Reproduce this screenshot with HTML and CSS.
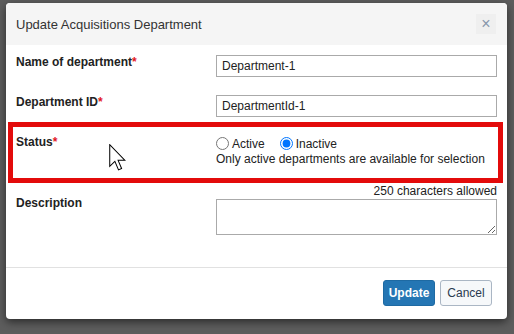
FILE: index.html
```html
<!DOCTYPE html>
<html>
<head>
<meta charset="utf-8">
<link rel="stylesheet" href="styles.css">
</head>
<body>
<div class="backdrop">
  <div class="modal">
    <div class="modal-header">
      <span class="modal-title">Update Acquisitions Department</span>
      <span class="close">&times;</span>
    </div>
    <div class="modal-body">
      <div class="row">
        <label class="label">Name of department<span class="req">*</span></label>
        <input class="text-input" type="text" value="Department-1">
      </div>
      <div class="row">
        <label class="label">Department ID<span class="req">*</span></label>
        <input class="text-input" type="text" value="DepartmentId-1">
      </div>
      <div class="row">
        <label class="label">Status<span class="req">*</span></label>
        <div class="value">
          <div class="radios">
            <label class="radio"><input type="radio" name="status"><span>Active</span></label>
            <label class="radio"><input type="radio" name="status" checked><span>Inactive</span></label>
          </div>
          <div class="help">Only active departments are available for selection</div>
        </div>
      </div>
      <div class="row">
        <label class="label label-desc">Description</label>
        <div class="value">
          <div class="counter">250 characters allowed</div>
          <textarea class="textarea"></textarea>
        </div>
      </div>
    </div>
    <div class="modal-footer">
      <button class="btn btn-primary">Update</button>
      <button class="btn btn-default">Cancel</button>
    </div>
    <div class="highlight"></div>
    <svg class="cursor" width="17" height="27" viewBox="0 0 12.5 20">
      <path d="M0.5 0.5 V16.5 L4.3 12.9 L7 19.2 L9.3 18.2 L6.7 12.1 H11.8 Z" fill="#fff" stroke="#000" stroke-width="0.75" stroke-linejoin="miter"/>
    </svg>
  </div>
</div>
</body>
</html>
```
FILE: styles.css
```css
* { box-sizing: border-box; }
html, body { margin: 0; padding: 0; }
body {
  background: #5d5d5d;
  font-family: "Liberation Sans", Arial, sans-serif;
  color: #333;
  width: 514px;
  height: 334px;
  overflow: hidden;
}
.backdrop {
  padding: 3px 0 0 6px;
}
.modal {
  position: relative;
  width: 501px;
  height: 316px;
  background: #fff;
  border-radius: 4px;
  box-shadow: 0 3px 9px rgba(0,0,0,0.55);
  display: flex;
  flex-direction: column;
}
.modal-header {
  height: 42px;
  background: #f5f5f5;
  border-radius: 4px 4px 0 0;
  display: flex;
  align-items: center;
  justify-content: space-between;
  padding: 0 11px 0 10px;
}
.modal-title {
  font-size: 13px;
  color: #333;
}
.close {
  width: 20px;
  height: 20px;
  background: #efefef;
  color: #8797ab;
  font-size: 16px;
  line-height: 19px;
  text-align: center;
}
.modal-body {
  padding: 10px 10px 32px 10px;
  display: flex;
  flex-direction: column;
  gap: 18px;
}
.row {
  display: grid;
  grid-template-columns: 200px 281px;
  align-items: start;
}
.label {
  font-size: 12px;
  font-weight: bold;
  line-height: 14px;
  color: #222;
}
.req {
  color: #e2161f;
}
.label-desc {
  margin-top: 12px;
}
.text-input {
  width: 281px;
  height: 22px;
  margin: 0;
  border: 1px solid #aaa;
  padding: 0 5px;
  font-family: "Liberation Sans", Arial, sans-serif;
  font-size: 12px;
  color: #222;
  background: #fff;
}
.value {
  font-size: 12px;
  color: #222;
}
.radios {
  display: flex;
  align-items: center;
  height: 17px;
}
.radio {
  display: flex;
  align-items: center;
  margin-right: 15px;
}
.radio input {
  width: 13px;
  height: 13px;
  margin: 0 3px 0 0;
}
.help {
  line-height: 14px;
}
.counter {
  text-align: right;
  line-height: 14px;
}
.textarea {
  display: block;
  width: 281px;
  height: 36px;
  margin: 1px 0 0 0;
  border: 1px solid #aaa;
  resize: vertical;
}
.modal-footer {
  border-top: 1px solid #e1e1e1;
  padding: 12px 15px 13px 0;
  display: flex;
  justify-content: flex-end;
  gap: 5px;
  margin-top: auto;
}
.btn {
  height: 26px;
  width: 52px;
  padding: 0;
  border-radius: 3px;
  font-family: "Liberation Sans", Arial, sans-serif;
  font-size: 12px;
}
.btn-primary {
  background: #2476b4;
  border: 1px solid #1e6aa3;
  color: #fff;
  font-weight: bold;
}
.btn-default {
  background: #f6f8fa;
  border: 1px solid #aab6c4;
  color: #2a3a50;
}
.highlight {
  position: absolute;
  left: 2px;
  top: 119px;
  width: 495px;
  height: 61px;
  border: 5px solid #e30b0b;
  pointer-events: none;
}
.cursor {
  position: absolute;
  left: 103px;
  top: 141px;
}
```
